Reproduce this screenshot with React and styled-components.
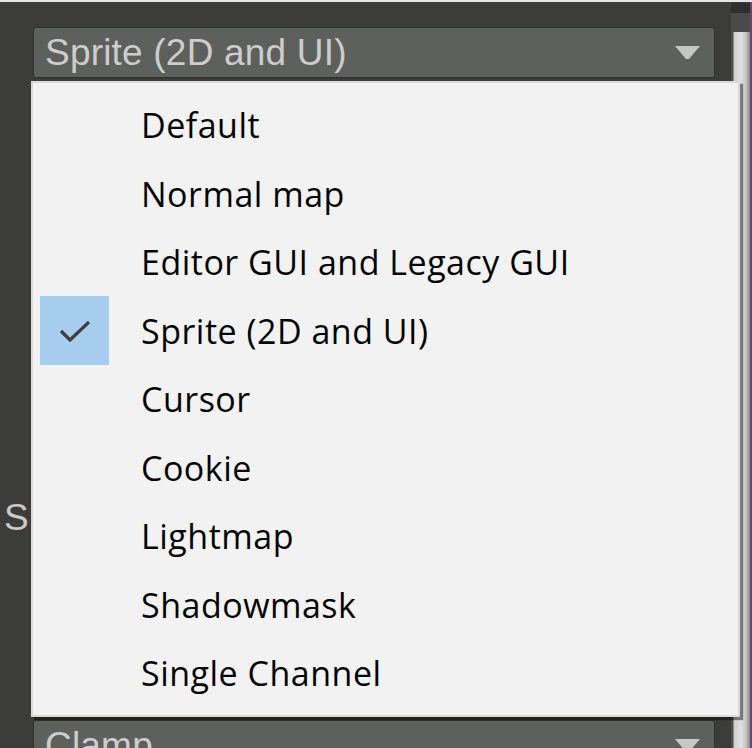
import React from "react";
import styled, { createGlobalStyle } from "styled-components";

const GlobalStyle = createGlobalStyle`
  html, body {
    margin: 0;
    padding: 0;
    background: #3c3d3a;
  }
`;

const Page = styled.div`
  position: relative;
  width: 752px;
  height: 748px;
  overflow: hidden;
  background: #3c3d3a;
  display: flex;
  flex-direction: column;
`;

const TopStrip = styled.div`
  height: 2px;
  background: #e4e4e4;
  flex: none;
`;

const Body = styled.div`
  flex: 1;
  display: flex;
`;

const Inspector = styled.div`
  flex: 1;
  display: flex;
  flex-direction: column;
  padding: 25px 16px 0 0;
`;

const Dropdown = styled.div`
  flex: none;
  height: 51px;
  margin-left: 33px;
  margin-top: ${(p) => p.$gap || 0}px;
  box-sizing: border-box;
  border: 1px solid #30312f;
  border-radius: 3px;
  background: #5e605d;
  display: flex;
  align-items: center;
  padding: 0 14px 0 11px;
  font-family: "Liberation Sans", Arial, sans-serif;
  font-size: 37px;
  letter-spacing: 0.2px;
  color: #cdcdcd;
`;

const DropdownText = styled.span`
  flex: 1;
  white-space: nowrap;
  line-height: 1;
`;

const LabelRow = styled.div`
  flex: none;
  height: 51px;
  margin-top: ${(p) => p.$gap || 0}px;
  display: flex;
  align-items: center;
  padding-left: 4px;
  font-family: "Liberation Sans", Arial, sans-serif;
  font-size: 37px;
  color: #c9c9c9;
`;

const Scroller = styled.div`
  width: 21px;
  flex: none;
  display: flex;
  flex-direction: column;
  border-right: 2px solid #5a4b66;
  box-sizing: border-box;
`;

const ScrollCap = styled.div`
  height: 10px;
  margin-top: 1px;
  background: #2e2f2d;
`;

const ScrollGap = styled.div`
  height: 19px;
  background: #4a4b49;
`;

const ScrollThumb = styled.div`
  flex: 1;
  background: linear-gradient(90deg, #4c4d4b 0, #4c4d4b 2px, #cfcfcf 3px, #e2e2e2 10px, #c4c4c4 15px, #8a8a8a 19px);
`;

const Popup = styled.div`
  position: absolute;
  left: 31px;
  top: 81px;
  width: 709px;
  height: 636px;
  box-sizing: border-box;
  background: #f2f2f2;
  border: 2px solid #dadada;
  box-shadow: 3px 3px 1px rgba(0, 0, 0, 0.45);
  padding: 8px 0 0 7px;
`;

const Item = styled.div`
  height: 68.5px;
  display: flex;
  align-items: center;
  gap: 32px;
  font-family: "Open Sans", "Noto Sans", sans-serif;
  font-size: 34px;
  letter-spacing: 0.5px;
  color: #050505;
`;

const Check = styled.div`
  width: 69px;
  height: 69px;
  flex: none;
  display: flex;
  align-items: center;
  justify-content: center;
  background: ${(p) => (p.$on ? "#a7cdee" : "transparent")};
`;

const Arrow = () => (
  <svg width="25" height="14" viewBox="0 0 25 14">
    <path d="M0 0 H25 L14 13 H11 Z" fill="#c6c6c6" />
  </svg>
);

const items = [
  "Default",
  "Normal map",
  "Editor GUI and Legacy GUI",
  "Sprite (2D and UI)",
  "Cursor",
  "Cookie",
  "Lightmap",
  "Shadowmask",
  "Single Channel",
];

export default function App() {
  const selected = "Sprite (2D and UI)";
  return (
    <Page>
      <GlobalStyle />
      <TopStrip />
      <Body>
        <Inspector>
          <Dropdown>
            <DropdownText>Sprite (2D and UI)</DropdownText>
            <Arrow />
          </Dropdown>
          <LabelRow $gap={414}>S</LabelRow>
          <Dropdown $gap={177}>
            <DropdownText>Clamp</DropdownText>
            <Arrow />
          </Dropdown>
        </Inspector>
        <Scroller>
          <ScrollCap />
          <ScrollGap />
          <ScrollThumb />
        </Scroller>
      </Body>
      <Popup>
        {items.map((label) => (
          <Item key={label}>
            <Check $on={label === selected}>
              {label === selected && (
                <svg width="32" height="24" viewBox="0 0 32 24">
                  <path
                    d="M2 12 L11 21 L30 3"
                    fill="none"
                    stroke="#3e3e3e"
                    strokeWidth="3.2"
                  />
                </svg>
              )}
            </Check>
            <span>{label}</span>
          </Item>
        ))}
      </Popup>
    </Page>
  );
}
